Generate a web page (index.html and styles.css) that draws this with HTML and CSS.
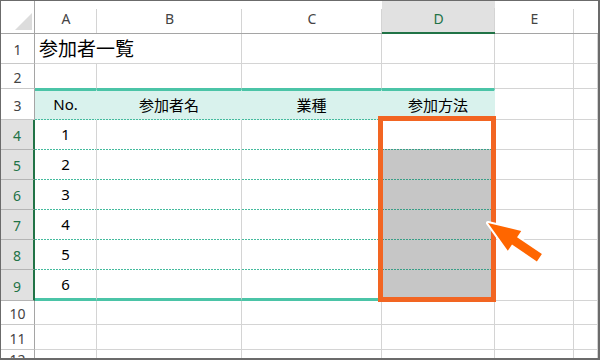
FILE: index.html
```html
<!DOCTYPE html>
<html lang="ja">
<head>
<meta charset="utf-8">
<title>参加者一覧</title>
<link rel="stylesheet" href="styles.css">
</head>
<body>
<div class="frame">
  <div class="sheet">
    <div class="corner"><svg width="17" height="17" viewBox="0 0 17 17"><polygon points="0,17 17,17 17,0" fill="#dcdcdc"/></svg></div>
    <div class="ch">A</div><div class="ch">B</div><div class="ch">C</div><div class="ch sel">D</div><div class="ch">E</div><div class="ch last"></div>

    <div class="rh">1</div><div class="c title">参加者一覧</div><div class="c"></div><div class="c"></div><div class="c"></div><div class="c"></div><div class="c"></div>

    <div class="rh">2</div><div class="c tt"></div><div class="c tt"></div><div class="c tt"></div><div class="c tt"></div><div class="c"></div><div class="c"></div>

    <div class="rh">3</div><div class="c th">No.</div><div class="c th">参加者名</div><div class="c th">業種</div><div class="c th">参加方法</div><div class="c"></div><div class="c"></div>

    <div class="rh sel">4</div><div class="c tb">1</div><div class="c tb"></div><div class="c tb"></div><div class="c tb d4"></div><div class="c"></div><div class="c"></div>
    <div class="rh sel">5</div><div class="c tb">2</div><div class="c tb"></div><div class="c tb"></div><div class="c tb g"></div><div class="c"></div><div class="c"></div>
    <div class="rh sel">6</div><div class="c tb">3</div><div class="c tb"></div><div class="c tb"></div><div class="c tb g"></div><div class="c"></div><div class="c"></div>
    <div class="rh sel">7</div><div class="c tb">4</div><div class="c tb"></div><div class="c tb"></div><div class="c tb g"></div><div class="c"></div><div class="c"></div>
    <div class="rh sel">8</div><div class="c tb">5</div><div class="c tb"></div><div class="c tb"></div><div class="c tb g"></div><div class="c"></div><div class="c"></div>
    <div class="rh sel">9</div><div class="c tl">6</div><div class="c tl"></div><div class="c tl"></div><div class="c tl g"></div><div class="c"></div><div class="c"></div>

    <div class="rh">10</div><div class="c"></div><div class="c"></div><div class="c"></div><div class="c"></div><div class="c"></div><div class="c"></div>
    <div class="rh">11</div><div class="c"></div><div class="c"></div><div class="c"></div><div class="c"></div><div class="c"></div><div class="c"></div>
    <div class="rh cut">12</div><div class="c cut"></div><div class="c cut"></div><div class="c cut"></div><div class="c cut"></div><div class="c cut"></div><div class="c cut"></div>
  </div>
  <div class="hl"></div>
  <svg class="arrow" width="600" height="360" viewBox="0 0 600 360">
    <polygon transform="translate(488 223) rotate(34)" points="0,0 32,-12 32,-4.5 62,-4.5 62,4.5 32,4.5 32,12" fill="#ff6600" stroke="#ffffff" stroke-width="4" stroke-linejoin="round" paint-order="stroke"/>
  </svg>
</div>
</body>
</html>
```

FILE: styles.css
```css
* { box-sizing: border-box; }

body {
  margin: 0;
  background: #ffffff;
  font-family: "Noto Sans", "Noto Sans CJK JP", sans-serif;
}

.frame {
  position: relative;
  width: 600px;
  height: 360px;
  border-style: solid;
  border-color: #6b6b6b;
  border-width: 1px 2px 2px 1px;
  overflow: hidden;
  background: #ffffff;
}

.sheet {
  display: grid;
  grid-template-columns: 34px 62px 145px 140px 113px 79px 1fr;
  grid-template-rows: 33px 30px 25px 31px repeat(5, 30px) 31px 24px 25px 1fr;
  height: 100%;
}

.sheet > div {
  display: flex;
  align-items: center;
  justify-content: center;
  border-right: 1px solid #d4d4d4;
  border-bottom: 1px solid #d4d4d4;
  font-size: 15px;
  color: #000000;
  white-space: nowrap;
  min-width: 0;
}

.sheet > .corner {
  justify-content: flex-end;
  align-items: flex-end;
  padding: 0 2px 3px 0;
  border-right-color: #a5a5a5;
  border-bottom-color: #a5a5a5;
}

.corner svg { display: block; }

.sheet > .ch {
  border-right: none;
  border-bottom-color: #a5a5a5;
  background: linear-gradient(#d4d4d4, #d4d4d4) right bottom / 1px 24px no-repeat;
  color: #444444;
  font-size: 14px;
  padding-top: 3px;
}

.sheet > .ch.last { background: none; }

.sheet > .ch.sel {
  background: linear-gradient(#d4d4d4, #d4d4d4) right bottom / 1px 24px no-repeat, #e1e1e1;
  border-bottom: 2px solid #217346;
  color: #217346;
}

.sheet > .rh {
  border-right-color: #a5a5a5;
  border-bottom-color: #c8c8c8;
  color: #444444;
  font-size: 14px;
  padding-top: 2px;
}

.sheet > .rh.sel {
  background: #e1e1e1;
  color: #217346;
  border-right: 2px solid #217346;
  border-bottom-color: #b4b4b4;
}

.sheet > .title {
  justify-content: flex-start;
  padding-left: 4px;
  padding-bottom: 2px;
  font-size: 19px;
  border-right: none;
}

.sheet > .tt { border-bottom-color: #4bc4a7; }

.sheet > .th {
  border-top: 2px solid #4bc4a7;
  border-bottom: none;
  border-right-color: #d9f2ed;
  padding-bottom: 3px;
  background: linear-gradient(90deg, #45bb9e 2px, transparent 2px) left bottom / 3px 1px repeat-x border-box, #d9f2ed;
}

.sheet > .tb {
  border-bottom: none;
  padding-bottom: 3px;
  background: linear-gradient(90deg, #45bb9e 2px, transparent 2px) left bottom / 3px 1px repeat-x border-box;
}

.sheet > .tb.g {
  background: linear-gradient(90deg, #3a9f88 2px, transparent 2px) left bottom / 3px 1px repeat-x border-box, #c6c6c6;
}

.sheet > .tb.d4 {
  background: linear-gradient(90deg, #3a9f88 2px, transparent 2px) left bottom / 3px 1px repeat-x border-box,
              linear-gradient(#c6c6c6, #c6c6c6) left bottom / 100% 1px no-repeat border-box,
              #ffffff;
}

.sheet > .tl {
  border-bottom: 3px solid #4bc4a7;
}

.sheet > .tl.g { background: #c6c6c6; }

.sheet > .cut {
  align-items: flex-start;
  border-bottom: none;
  padding-top: 0;
}

.hl {
  position: absolute;
  left: 377px;
  top: 115px;
  width: 118px;
  height: 186px;
  border: 5px solid #f26522;
}

.arrow {
  position: absolute;
  left: -1px;
  top: -1px;
  pointer-events: none;
}
```
